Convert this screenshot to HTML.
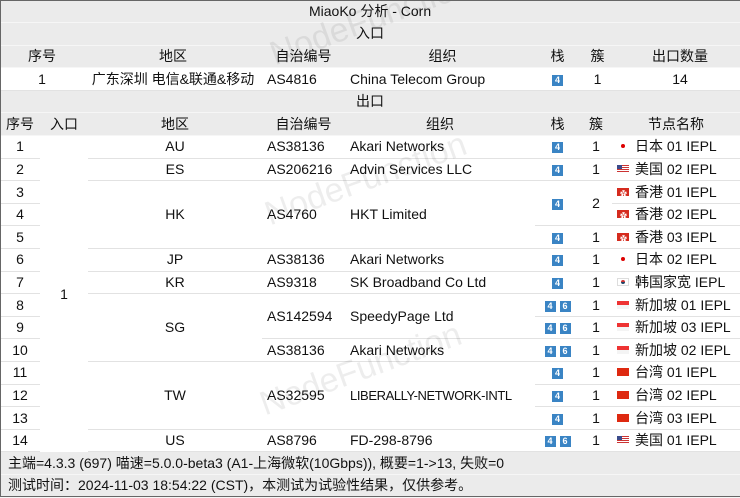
<!DOCTYPE html>
<html><head><meta charset="utf-8"><style>
*{margin:0;padding:0;box-sizing:border-box}
body{width:740px;height:497px;overflow:hidden;background:#fff;font-family:"Liberation Sans","Noto Sans CJK SC",sans-serif;font-size:14px;color:#111;position:relative}
.frame{position:absolute;left:0;top:0;width:740px;height:497px;border:1px solid #666;border-right:none;pointer-events:none;z-index:5}
table{border-collapse:collapse;table-layout:fixed;width:740px;position:absolute;left:0}
td{height:22.6px;padding:0;white-space:nowrap;overflow:hidden;text-align:center;border-bottom:1px solid #e2e2e2;line-height:21px}
tr.g td{background:#ebebeb;border-bottom:1px solid #f6f6f6}
.l{text-align:left;padding-left:5px}
.n{text-align:center}
.b{display:inline-block;width:11px;height:11px;background:#3a84c4;color:#fff;font-size:9px;font-weight:bold;line-height:11px;text-align:center;vertical-align:1px;margin:0 2px}
.f{display:inline-block;width:12px;height:8px;margin-right:6px;vertical-align:1px;position:relative}
.jp{background:#fff}.jp:after{content:"";position:absolute;left:4px;top:2px;width:4px;height:4px;border-radius:50%;background:#d00}
.us{background:repeating-linear-gradient(#c33 0 1px,#fff 1px 2px)}.us:after{content:"";position:absolute;left:0;top:0;width:5px;height:4px;background:#3b4a8a}
.hk{background:#d52b1e}.hk:after{content:"✿";position:absolute;left:3px;top:-4px;font-size:7px;color:#fff}
.kr{background:#fff;border:1px solid #ddd}.kr:after{content:"";position:absolute;left:3px;top:1px;width:4px;height:4px;border-radius:50%;background:linear-gradient(#c33 50%,#246 50%)}
.sg{background:linear-gradient(#e33 50%,#f4f4f4 50%)}
.cn{background:#de2910}
.wm{position:absolute;color:rgba(0,0,0,0.07);font-size:34px;transform:rotate(-20deg);z-index:4;pointer-events:none;font-family:"Liberation Sans",sans-serif}
</style></head><body>
<div class="frame"></div>
<div class="wm" style="left:265px;top:0px">NodeFunction</div>
<div class="wm" style="left:260px;top:160px">NodeFunction</div>
<div class="wm" style="left:255px;top:350px">NodeFunction</div>
<table style="top:0">
<colgroup><col style="width:84px"><col style="width:178px"><col style="width:83px"><col style="width:195px"><col style="width:35px"><col style="width:45px"><col style="width:120px"></colgroup>
<tr class="g"><td colspan="7">MiaoKo 分析 - Corn</td></tr>
<tr class="g"><td colspan="7">入口</td></tr>
<tr class="g"><td>序号</td><td>地区</td><td>自治编号</td><td>组织</td><td>栈</td><td>簇</td><td>出口数量</td></tr>
<tr><td>1</td><td>广东深圳 电信&amp;联通&amp;移动</td><td class="l">AS4816</td><td class="l">China Telecom Group</td><td><span class="b">4</span></td><td>1</td><td>14</td></tr>
<tr class="g"><td colspan="7">出口</td></tr>
</table>
<table style="top:113px">
<colgroup><col style="width:40px"><col style="width:48px"><col style="width:174px"><col style="width:83px"><col style="width:190px"><col style="width:45px"><col style="width:32px"><col style="width:128px"></colgroup>
<tr class="g"><td class="n">序号</td><td>入口</td><td>地区</td><td>自治编号</td><td>组织</td><td>栈</td><td>簇</td><td>节点名称</td></tr>
<tr><td class="n">1</td><td rowspan="14" style="border-bottom:none">1</td><td>AU</td><td class="l">AS38136</td><td class="l">Akari Networks</td><td><span class="b">4</span></td><td>1</td><td class="l"><span class="f jp"></span>日本 01 IEPL</td></tr>
<tr><td class="n">2</td><td>ES</td><td class="l">AS206216</td><td class="l">Advin Services LLC</td><td><span class="b">4</span></td><td>1</td><td class="l"><span class="f us"></span>美国 02 IEPL</td></tr>
<tr><td class="n">3</td><td rowspan="3">HK</td><td rowspan="3" class="l">AS4760</td><td rowspan="3" class="l">HKT Limited</td><td rowspan="2"><span class="b">4</span></td><td rowspan="2">2</td><td class="l"><span class="f hk"></span>香港 01 IEPL</td></tr>
<tr><td class="n">4</td><td class="l"><span class="f hk"></span>香港 02 IEPL</td></tr>
<tr><td class="n">5</td><td><span class="b">4</span></td><td>1</td><td class="l"><span class="f hk"></span>香港 03 IEPL</td></tr>
<tr><td class="n">6</td><td>JP</td><td class="l">AS38136</td><td class="l">Akari Networks</td><td><span class="b">4</span></td><td>1</td><td class="l"><span class="f jp"></span>日本 02 IEPL</td></tr>
<tr><td class="n">7</td><td>KR</td><td class="l">AS9318</td><td class="l">SK Broadband Co Ltd</td><td><span class="b">4</span></td><td>1</td><td class="l"><span class="f kr"></span>韩国家宽 IEPL</td></tr>
<tr><td class="n">8</td><td rowspan="3">SG</td><td rowspan="2" class="l">AS142594</td><td rowspan="2" class="l">SpeedyPage Ltd</td><td><span class="b">4</span><span class="b">6</span></td><td>1</td><td class="l"><span class="f sg"></span>新加坡 01 IEPL</td></tr>
<tr><td class="n">9</td><td><span class="b">4</span><span class="b">6</span></td><td>1</td><td class="l"><span class="f sg"></span>新加坡 03 IEPL</td></tr>
<tr><td class="n">10</td><td class="l">AS38136</td><td class="l">Akari Networks</td><td><span class="b">4</span><span class="b">6</span></td><td>1</td><td class="l"><span class="f sg"></span>新加坡 02 IEPL</td></tr>
<tr><td class="n">11</td><td rowspan="3">TW</td><td rowspan="3" class="l">AS32595</td><td rowspan="3" class="l" style="font-size:13px;letter-spacing:-0.4px">LIBERALLY-NETWORK-INTL</td><td><span class="b">4</span></td><td>1</td><td class="l"><span class="f cn"></span>台湾 01 IEPL</td></tr>
<tr><td class="n">12</td><td><span class="b">4</span></td><td>1</td><td class="l"><span class="f cn"></span>台湾 02 IEPL</td></tr>
<tr><td class="n">13</td><td><span class="b">4</span></td><td>1</td><td class="l"><span class="f cn"></span>台湾 03 IEPL</td></tr>
<tr><td class="n">14</td><td>US</td><td class="l">AS8796</td><td class="l">FD-298-8796</td><td><span class="b">4</span><span class="b">6</span></td><td>1</td><td class="l"><span class="f us"></span>美国 01 IEPL</td></tr>
<tr class="g"><td colspan="8" class="l" style="padding-left:8px">主端=4.3.3 (697) 喵速=5.0.0-beta3 (A1-上海微软(10Gbps)), 概要=1-&gt;13, 失败=0</td></tr>
<tr class="g"><td colspan="8" class="l" style="padding-left:8px">测试时间：2024-11-03 18:54:22 (CST)，本测试为试验性结果，仅供参考。</td></tr>
</table>
</body></html>
